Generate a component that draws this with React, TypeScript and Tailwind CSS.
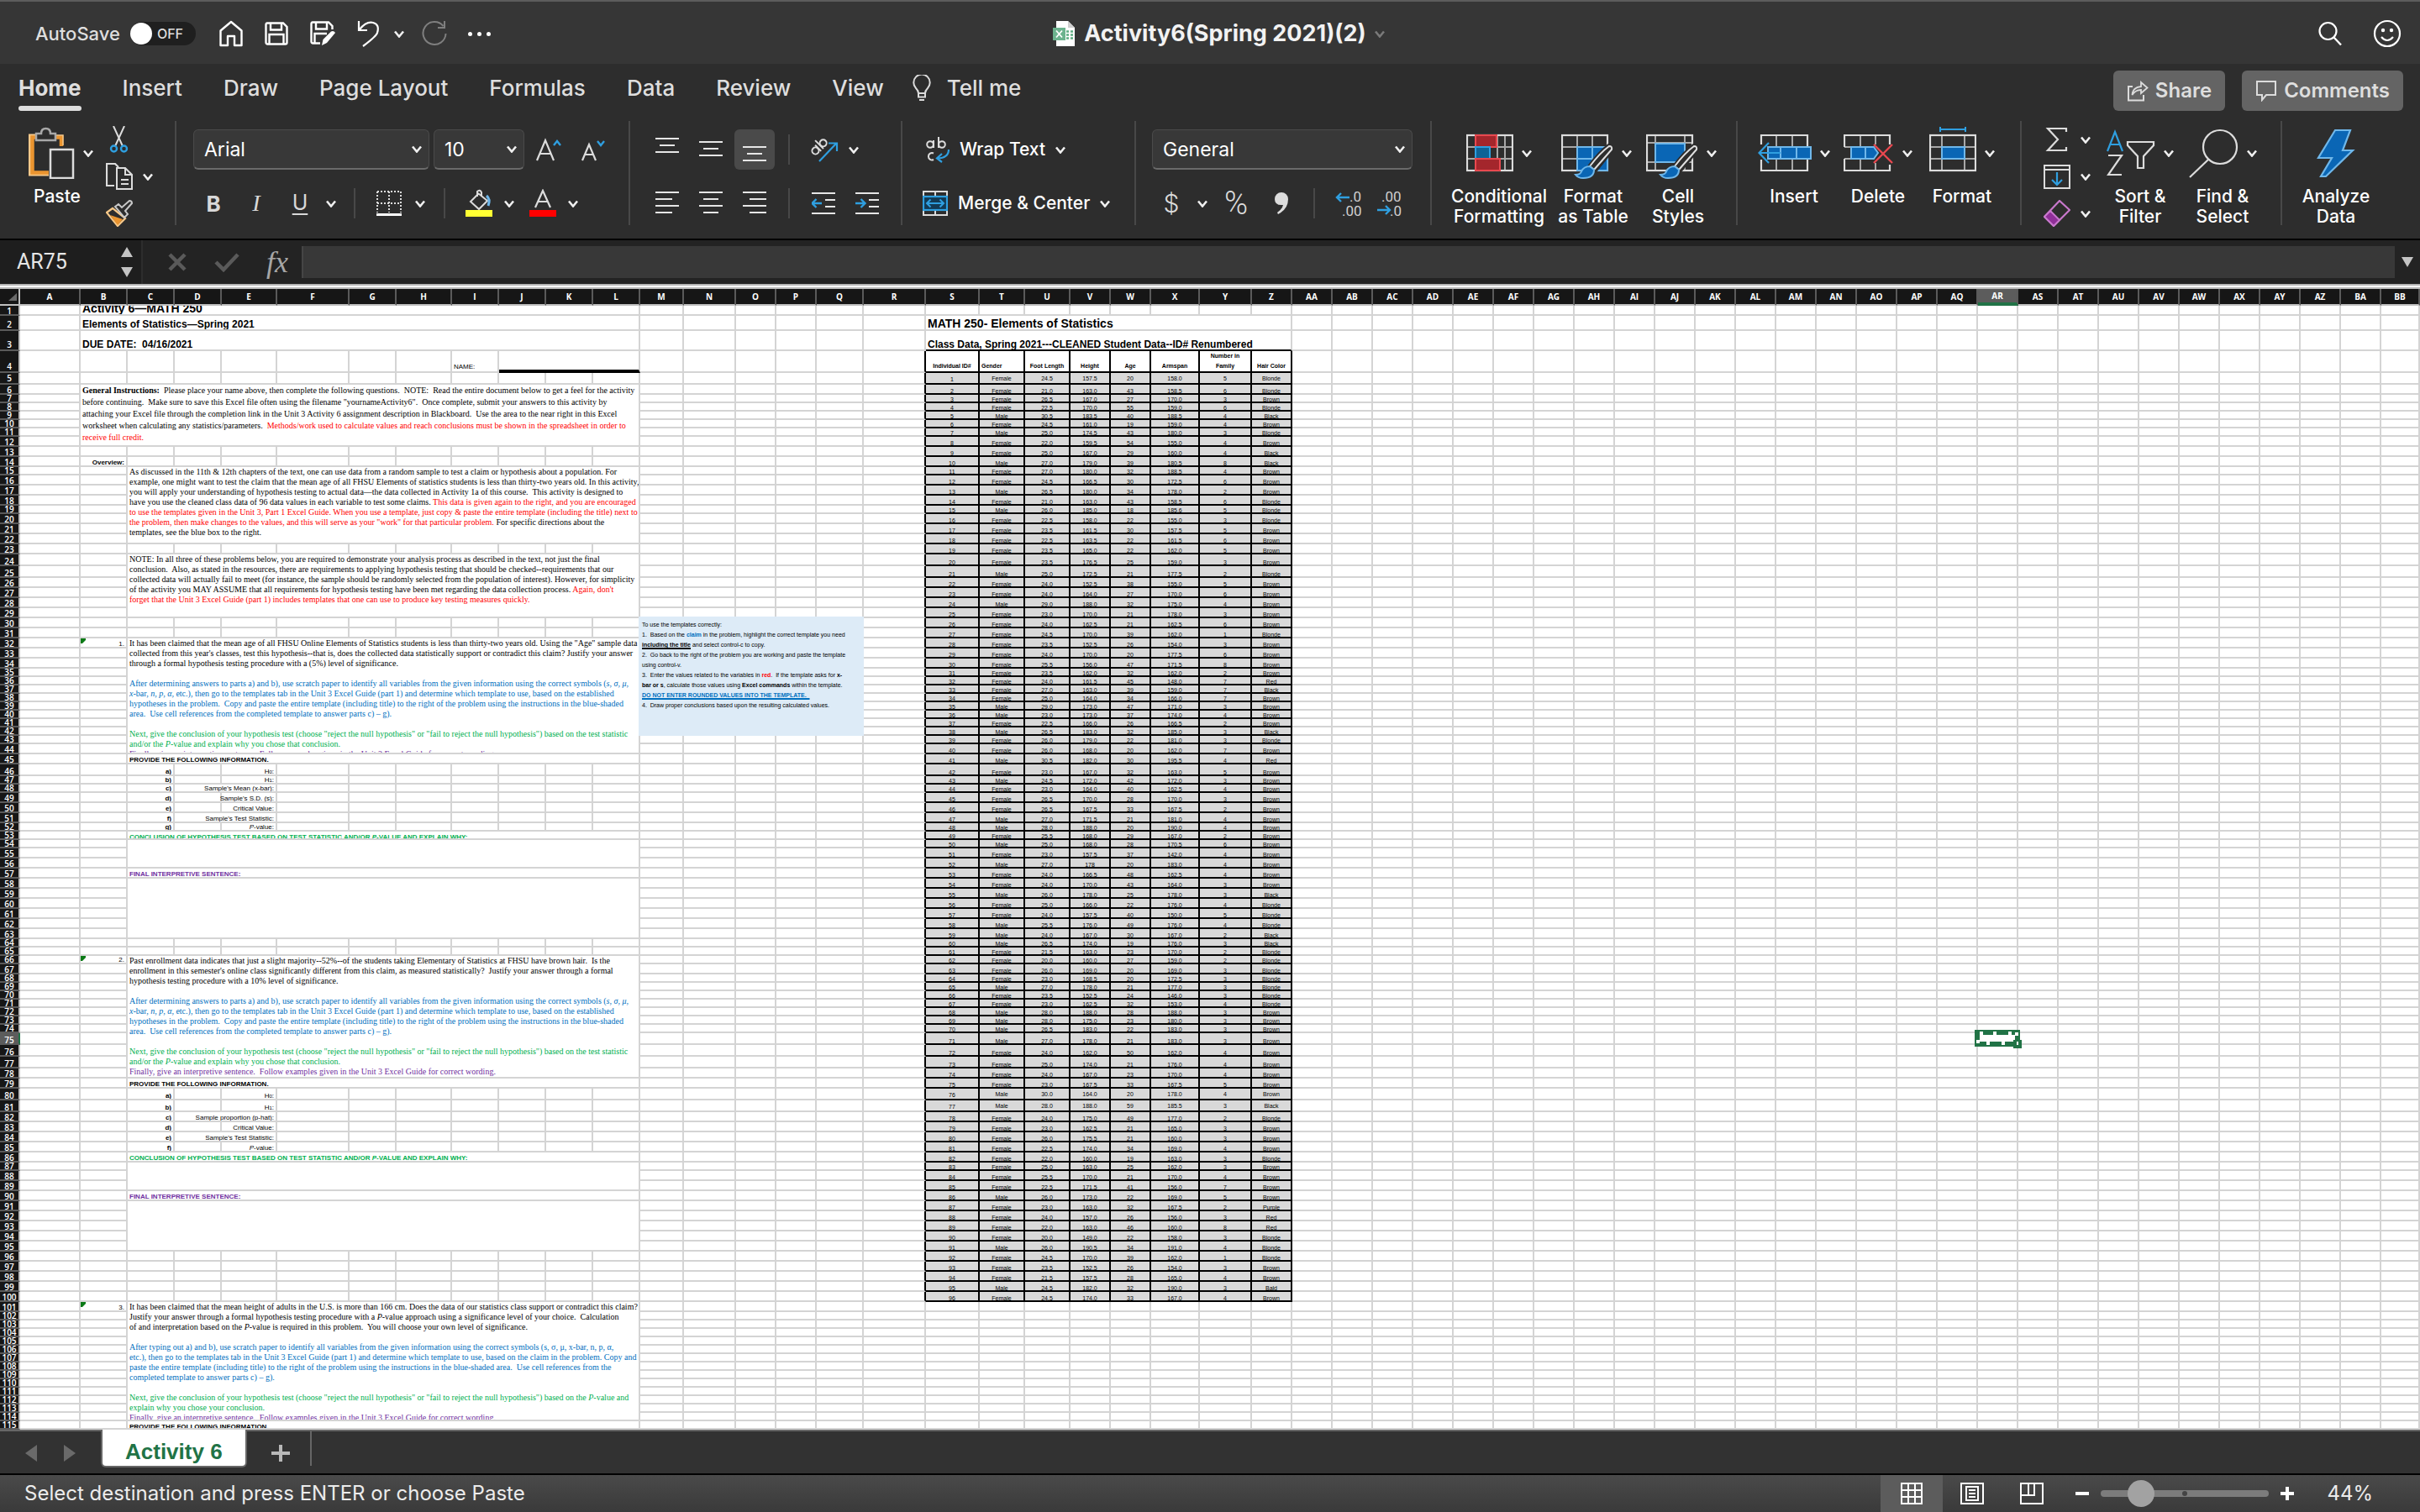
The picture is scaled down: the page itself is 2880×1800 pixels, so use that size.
import React from "react";

/* ------------------------------------------------------------------ */
/* Icons                                                               */
/* ------------------------------------------------------------------ */

type IconProps = { w: number; h: number; children: React.ReactNode; className?: string };

function Icon({ w, h, children, className }: IconProps) {
  return (
    <svg
      width={w}
      height={h}
      viewBox={`0 0 ${w} ${h}`}
      fill="none"
      stroke="#dcdcdc"
      strokeWidth={2}
      className={className ?? "shrink-0"}
      aria-hidden="true"
    >
      {children}
    </svg>
  );
}

function Chevron({ color = "#f0f0f0" }: { color?: string }) {
  return (
    <Icon w={12} h={9}>
      <path d="M1 1.5 6 7.5 11 1.5" stroke={color} strokeWidth={2.6} />
    </Icon>
  );
}

const BLUE = "#2f9fe0";
const FILL_BLUE = "#0a66b5";
const LIGHT_BLUE = "#6fb7ea";

const HomeIcon = () => (
  <Icon w={28} h={32}>
    <path d="M1.5 12.500 14 2 26.500 12.500V30H18V19H10V30H1.500Z" stroke="#fff" strokeWidth={2.4} strokeLinejoin="round" />
  </Icon>
);
const SaveIcon = () => (
  <Icon w={28} h={28}>
    <path d="M3 1.500H22L26.500 6V24.500Q26.500 26.500 24.500 26.500H3.500Q1.500 26.500 1.500 24.500V3.500Q1.500 1.500 3 1.500Z" stroke="#fff" strokeWidth={2.4} />
    <path d="M7 2V9.500H20V2M5.500 26V15H22.500V26" stroke="#fff" strokeWidth={2.4} />
  </Icon>
);
const SaveEditIcon = () => (
  <Icon w={32} h={30}>
    <path d="M12 26.500H3.500Q1.500 26.500 1.500 24.500V3.500Q1.500 1.500 3 1.500H22L26.500 6V10" stroke="#fff" strokeWidth={2.4} />
    <path d="M7 2V9.500H20V2M5.500 26V15H20" stroke="#fff" strokeWidth={2.4} />
    <path d="M14 29 15.500 22 25 12.500Q28 11 30 14L20 26Z" fill="#fff" stroke="none" />
  </Icon>
);
const UndoIcon = () => (
  <Icon w={28} h={32}>
    <path d="M2 1V12H12M2.500 11.500Q11 1 19 3T24 15Q23 19 7 31" stroke="#fff" strokeWidth={2.2} />
  </Icon>
);
const RedoIcon = () => (
  <Icon w={32} h={32}>
    <path d="M26.500 7A13.500 13.500 0 1 0 29.500 16" stroke="#7f7f7f" />
    <path d="M28 1V9H20" stroke="#7f7f7f" />
  </Icon>
);
const ExcelFileIcon = () => (
  <Icon w={28} h={30}>
    <path d="M5 0H19L27 8V30H5Z" fill="#fff" stroke="none" />
    <path d="M19 0V8H27Z" fill="#cfcfcf" stroke="none" />
    <path d="M17 12.500h3M22 12.500h3M17 16.500h3M22 16.500h3M17 20.500h3M22 20.500h3" stroke="#5fae84" strokeWidth={2.500} />
    <rect x="1" y="8" width="15" height="15" fill="#6cb38e" stroke="none" />
    <path d="M5 11.500 12 19.500M12 11.500 5 19.500" stroke="#fff" strokeWidth={1.800} />
  </Icon>
);
const SearchIcon = () => (
  <Icon w={28} h={30}>
    <circle cx="11.500" cy="12" r="10" stroke="#fff" strokeWidth={2.2} />
    <path d="M18.500 19.500 27 28.500" stroke="#fff" strokeWidth={2.400} />
  </Icon>
);
const SmileIcon = () => (
  <Icon w={34} h={34}>
    <circle cx="17" cy="17" r="15" stroke="#fff" strokeWidth={2.2} />
    <circle cx="12" cy="13" r="2.200" fill="#fff" stroke="none" />
    <circle cx="22" cy="13" r="2.200" fill="#fff" stroke="none" />
    <path d="M10 21Q17 29 24 21" stroke="#fff" strokeWidth={2.2} />
  </Icon>
);
const BulbIcon = () => (
  <Icon w={24} h={32}>
    <path d="M8 22Q8 19 5 16A9.700 9.700 0 1 1 19 16Q16 19 16 22Z" />
    <path d="M8 22V26.500H16V22M9 30H15" />
  </Icon>
);
const ShareIcon = () => (
  <Icon w={26} h={26}>
    <path d="M7 8H2V24.500H20V18" />
    <path d="M6.500 18Q7 9 17 8V3L24.500 9.500 17 16V12Q10 12 6.500 18Z" strokeWidth={1.800} />
  </Icon>
);
const CommentIcon = () => (
  <Icon w={26} h={26}>
    <path d="M2 2H24V18H13L8 24V18H2Z" />
  </Icon>
);
const PasteIcon = () => (
  <Icon w={56} h={62}>
    <path d="M10 10H2.500V57H25" stroke="#f7c98a" strokeWidth={3} />
    <path d="M10 12.500H5.500V54.500H25M32 12.500H40V23" stroke="#ea942f" strokeWidth={4.500} />
    <path d="M32 10H42V22" stroke="#f7c98a" strokeWidth={1.500} />
    <path d="M10 8H16Q16 2 21.500 2T27 8H33V16H10Z" stroke="#a8a8a8" strokeWidth={2.500} />
    <rect x="27" y="27" width="27" height="34" fill="#2d2d2d" strokeWidth={2.500} />
  </Icon>
);
const CutIcon = () => (
  <Icon w={32} h={32}>
    <path d="M9 0 20 24M22 0 11 24" strokeWidth={2} />
    <circle cx="9.500" cy="27" r="3.500" stroke={BLUE} strokeWidth={2.400} />
    <circle cx="21.500" cy="27" r="3.500" stroke={BLUE} strokeWidth={2.400} />
  </Icon>
);
const CopyIcon = () => (
  <Icon w={32} h={32}>
    <path d="M10 27H1V1H11L15 5" strokeWidth={2.200} />
    <path d="M13 6H23L31 14V31H13ZM23 6V14H31M18 20H27M18 25H27" strokeWidth={2} />
  </Icon>
);
const BrushIcon = () => (
  <Icon w={32} h={32}>
    <path d="M1 15 8 10 23 22 14 31Z" stroke="#f7c98a" strokeWidth={2.200} />
    <path d="M5 18 20 23 14 30Z" fill="#ea942f" stroke="none" />
    <path d="M11 8 15 5 19 9 28 1Q31 1 31 4L23 13 26 17 22 21Z" stroke="#c8c8c8" />
  </Icon>
);
const GrowFontIcon = () => (
  <Icon w={34} h={30}>
    <path d="M3 28 13 4 23 28M6.500 20H19.500" strokeWidth={2.200} />
    <path d="M23 10 27 5 31 10" stroke={BLUE} strokeWidth={2.400} />
  </Icon>
);
const ShrinkFontIcon = () => (
  <Icon w={34} h={30}>
    <path d="M3 28 11 9 19 28M6 21H16" strokeWidth={2.200} />
    <path d="M21 5 25 10 29 5" stroke={BLUE} strokeWidth={2.400} />
  </Icon>
);
const BordersIcon = () => (
  <Icon w={30} h={30}>
    <path d="M1 1H29M1 15H29M1 1V26M29 1V26M15 1V26" strokeDasharray="2 2" />
    <path d="M0 28.500H30" stroke="#fff" strokeWidth={3} />
  </Icon>
);
const FillIcon = () => (
  <Icon w={32} h={34}>
    <path d="M15 5 26 14 16 24 6 15 15 6M14 9V3Q17 0 19 4V9" strokeWidth={2} />
    <path d="M25 8Q30 12 27 20" stroke={LIGHT_BLUE} strokeWidth={3} />
    <rect x="0" y="25" width="32" height="8" fill="#ffff33" stroke="none" />
  </Icon>
);
const FontColorIcon = () => (
  <Icon w={32} h={34}>
    <path d="M7 22 16 2 25 22M10.500 15H21.500" strokeWidth={2.200} />
    <rect x="0" y="25" width="32" height="8" fill="#ff0000" stroke="none" />
  </Icon>
);
const AlignIcon = ({ rows }: { rows: [number, number, number][] }) => (
  <Icon w={28} h={28}>
    {rows.map(([y, a, b]) => (
      <path key={y} d={`M${a} ${y}H${b}`} stroke="#e6e6e6" />
    ))}
  </Icon>
);
const OrientationIcon = () => (
  <Icon w={34} h={32}>
    <g transform="rotate(-45 10 14)">
      <circle cx="5" cy="14" r="4" />
      <path d="M9.500 9V19M13.500 5V19" />
      <circle cx="18" cy="14" r="4" />
    </g>
    <path d="M11 30 31 9M22 8.500H32V18" stroke={BLUE} strokeWidth={2.200} />
  </Icon>
);
const IndentIcon = ({ right = false }: { right?: boolean }) => (
  <Icon w={28} h={28}>
    <path d="M0 2H28M16 10H28M16 18H28M0 26H28" stroke="#e6e6e6" />
    {right ? (
      <path d="M0 14H11M6.500 9 11.500 14 6.500 19" stroke={BLUE} strokeWidth={2.400} />
    ) : (
      <path d="M12 14H1M5.500 9 .5 14 5.500 19" stroke={BLUE} strokeWidth={2.400} />
    )}
  </Icon>
);
const WrapIcon = () => (
  <Icon w={28} h={32}>
    <circle cx="5" cy="10" r="3.800" />
    <path d="M9 5V14M15 1V14M9 20.500A4.200 4.200 0 1 0 9 28" />
    <circle cx="19" cy="10" r="3.800" />
    <path d="M27 16Q27 26 14 26.500M19 21 13 26.500 19 31" stroke={BLUE} strokeWidth={2.200} />
  </Icon>
);
const MergeIcon = () => (
  <Icon w={30} h={30}>
    <path d="M1 6V1H29V6M15 1V6M1 24V29H29V24M15 24V29" />
    <rect x="1" y="7" width="28" height="16" stroke={BLUE} strokeWidth={2.200} fill="#123a55" />
    <path d="M5 15H25M9.500 10.500 5 15 9.500 19.500M20.500 10.500 25 15 20.500 19.500" stroke={BLUE} />
  </Icon>
);
const DecimalIcon = ({ more }: { more: boolean }) => (
  <Icon w={34} h={32}>
    <g fill="#d0d0d0" stroke="none" fontFamily="Roboto, sans-serif" fontSize="17">
      {more ? (
        <>
          <text x="17" y="14">.0</text>
          <text x="8" y="31">.00</text>
        </>
      ) : (
        <>
          <text x="5" y="14">.00</text>
          <text x="15" y="31">.0</text>
        </>
      )}
    </g>
    {more ? (
      <path d="M17 9H2M7 4 2 9 7 14" stroke={BLUE} strokeWidth={2.400} />
    ) : (
      <path d="M0 24H15M10 19 15 24 10 29" stroke={BLUE} strokeWidth={2.400} />
    )}
  </Icon>
);
const ConditionalIcon = () => (
  <Icon w={56} h={64}>
    <path d="M1 25H55M1 39H55M11 11V53M37 11V53M46 11V53" stroke="#a8a8a8" />
    <rect x="1" y="11" width="54" height="42" strokeWidth={2.200} />
    <rect x="11" y="11" width="25" height="14" fill="#a4262c" stroke="#e8484f" />
    <rect x="11" y="25" width="17" height="14" fill="#0f6396" stroke="#2f9fe0" />
    <rect x="11" y="39" width="29" height="14" fill="#a4262c" stroke="#e8484f" />
  </Icon>
);
const BrushOverlay = () => (
  <>
    <path d="M57 24Q61 24 60 28L39 54 33 50Q46 32 57 24Z" fill="#2d2d2d" stroke="#2d2d2d" strokeWidth={6} />
    <path d="M57 24Q61 24 60 28L39 52 34 48Q46 32 57 24Z" fill="#2d2d2d" stroke="#e0e0e0" />
    <path d="M34 48 39 52Q39 62 26 62 20 62 17 58 23 58 24 54 27 48 34 48Z" fill={FILL_BLUE} stroke={LIGHT_BLUE} />
  </>
);
const FormatTableIcon = () => (
  <Icon w={62} h={64}>
    <path d="M1 25H55M1 39H55M19 11V53M37 11V53" stroke="#a8a8a8" />
    <rect x="1" y="11" width="54" height="42" strokeWidth={2.200} />
    <path d="M19 25H55V53H19ZM37 25V53M19 39H55" fill={FILL_BLUE} stroke={LIGHT_BLUE} />
    <BrushOverlay />
  </Icon>
);
const CellStylesIcon = () => (
  <Icon w={62} h={64}>
    <path d="M1 20H55M1 43H55M11 11V53M46 11V53" stroke="#a8a8a8" />
    <rect x="1" y="11" width="54" height="42" strokeWidth={2.200} />
    <rect x="11" y="21" width="35" height="22" fill={FILL_BLUE} stroke={LIGHT_BLUE} />
    <BrushOverlay />
  </Icon>
);
const InsertCellsIcon = () => (
  <Icon w={64} h={64}>
    <path d="M22 11V53M41 11V53" stroke="#a8a8a8" />
    <path d="M4 22V11H59V24M4 40V53H59V40" strokeWidth={2.200} />
    <rect x="12" y="25" width="51" height="14" fill={FILL_BLUE} stroke={LIGHT_BLUE} />
    <path d="M27 25V39M46 25V39" stroke={LIGHT_BLUE} />
    <path d="M27 32H2M13 20 1.500 32 13 44" stroke={BLUE} strokeWidth={2.200} />
  </Icon>
);
const DeleteCellsIcon = () => (
  <Icon w={60} h={64}>
    <path d="M20 11V24M38 11V22M20 40V53M38 44V53M1 25H9M1 39H9" stroke="#a8a8a8" />
    <path d="M1 25V11H55V22M1 39V53H55V46" strokeWidth={2.200} />
    <path d="M9 25H36L41 32 36 39H9ZM26 25V39" fill={FILL_BLUE} stroke={LIGHT_BLUE} />
    <path d="M36 22 58 44M58 22 36 44" stroke="#e8484f" strokeWidth={2.400} />
  </Icon>
);
const FormatCellsIcon = () => (
  <Icon w={56} h={64}>
    <path d="M13 4H43M13 1V7M43 1V7" stroke={BLUE} />
    <path d="M1 25H55M1 39H55M15 11V53M42 11V53" stroke="#a8a8a8" />
    <rect x="1" y="11" width="54" height="42" strokeWidth={2.200} />
    <rect x="15" y="25" width="27" height="14" fill={FILL_BLUE} stroke={LIGHT_BLUE} />
  </Icon>
);
const SigmaIcon = () => (
  <Icon w={32} h={32}>
    <path d="M27 7V3H5L17 16 5 29H27V25" strokeWidth={2.200} />
  </Icon>
);
const FillDownIcon = () => (
  <Icon w={32} h={32}>
    <path d="M1 3H31V30H1ZM1 8H31" />
    <path d="M16 11V26M10 20 16 26 22 20" stroke={BLUE} strokeWidth={2.200} />
  </Icon>
);
const EraserIcon = () => (
  <Icon w={32} h={32}>
    <path d="M1 20 19 1 31 12 12 31Z" stroke="#c878cc" strokeWidth={2.200} />
    <path d="M1 20 8 13 19 24 12 31Z" fill="#8f2f98" stroke="#c878cc" />
  </Icon>
);
const SortIcon = () => (
  <Icon w={58} h={64}>
    <path d="M1 30 10 7 19 30M4.500 22H15.500" stroke={BLUE} strokeWidth={2.200} />
    <path d="M2 35H18L2 58H18" strokeWidth={2.200} />
    <path d="M25 19H56V23L44 36V50H37V36L25 23Z" strokeWidth={2.200} />
  </Icon>
);
const FindIcon = () => (
  <Icon w={60} h={64}>
    <circle cx="38" cy="25" r="20" strokeWidth={2.200} />
    <path d="M24 40 2 61" strokeWidth={2.200} />
  </Icon>
);
const BoltIcon = () => (
  <Icon w={46} h={64}>
    <path d="M22 5H40L31 29H43L11 60H5L18 38H2Z" fill={FILL_BLUE} stroke={LIGHT_BLUE} strokeWidth={2.200} />
  </Icon>
);

/* ------------------------------------------------------------------ */
/* Ribbon                                                              */
/* ------------------------------------------------------------------ */

const VSep = ({ className }: { className: string }) => <div className={`h-9 w-0.5 bg-[#484848] ${className}`} />;

const IconButton = ({ label, className = "", children }: { label: string; className?: string; children: React.ReactNode }) => (
  <button type="button" aria-label={label} className={`flex shrink-0 items-center justify-center ${className}`}>
    {children}
  </button>
);

const MenuArrow = ({ label, className = "" }: { label: string; className?: string }) => (
  <IconButton label={`${label} options`} className={className}>
    <Chevron />
  </IconButton>
);

const Group = ({ className, children }: { className: string; children: React.ReactNode }) => (
  <div className={`flex h-[124px] shrink-0 border-r-2 border-[#484848] ${className}`}>{children}</div>
);

const TwoRows = ({ top, bottom }: { top: React.ReactNode; bottom: React.ReactNode }) => (
  <div className="flex flex-col gap-4 pt-2.5">
    <div className="flex h-12 items-center">{top}</div>
    <div className="flex h-12 items-center">{bottom}</div>
  </div>
);

type BigButtonProps = { icon: React.ReactNode; lines: string[]; className: string; labelClass?: string; arrow?: boolean };

const BigButton = ({ icon, lines, className, labelClass = "", arrow = true }: BigButtonProps) => (
  <button type="button" className={`flex shrink-0 flex-col items-center pt-1.5 ${className}`}>
    <span className="flex h-16 items-center gap-2.5">
      {icon}
      {arrow && <Chevron />}
    </span>
    <span className={`mt-2 flex flex-col text-[21px] leading-6 font-medium whitespace-nowrap text-white ${labelClass}`}>
      {lines.map((l) => (
        <span key={l}>{l}</span>
      ))}
    </span>
  </button>
);

const Dropdown = ({ label, value, className }: { label: string; value: string; className: string }) => (
  <label className={`grid h-12 shrink-0 items-center rounded-md border border-b-2 border-[#4a4a4a] border-b-[#6a6a6a] bg-[#383838] ${className}`}>
    <span className="sr-only">{label}</span>
    <select aria-label={label} defaultValue={value} className="col-start-1 row-start-1 h-full w-full appearance-none bg-transparent pl-3 text-[23px] leading-8 text-white outline-none">
      <option>{value}</option>
    </select>
    <span className="pointer-events-none col-start-1 row-start-1 mr-2 justify-self-end">
      <Chevron />
    </span>
  </label>
);

const LEFT: [number, number, number][] = [[1, 0, 28], [9, 0, 20], [17, 0, 28], [25, 0, 20]];
const CENTER: [number, number, number][] = [[1, 0, 28], [9, 5, 23], [17, 0, 28], [25, 5, 23]];
const RIGHT: [number, number, number][] = [[1, 0, 28], [9, 8, 28], [17, 0, 28], [25, 8, 28]];

function TitleBar() {
  return (
    <header className="flex h-[76px] items-center border-t-2 border-[#5c5c5c] bg-[#363636] px-[22px] pt-0.5">
      <div className="flex flex-1 items-center pl-5">
        <label className="flex items-center gap-3 text-[22px] font-medium text-[#dedede]">
          AutoSave
          <input type="checkbox" className="sr-only" />
          <span className="flex h-7 w-[78px] items-center gap-1.5 rounded-full bg-[#1f1f1f]">
            <span className="size-[26px] rounded-full bg-white" />
            <span className="text-[16px]">OFF</span>
          </span>
        </label>
        <IconButton label="Home" className="ml-7"><HomeIcon /></IconButton>
        <IconButton label="Save" className="ml-[26px]"><SaveIcon /></IconButton>
        <IconButton label="Save a copy" className="ml-[26px]"><SaveEditIcon /></IconButton>
        <IconButton label="Undo" className="ml-6"><UndoIcon /></IconButton>
        <MenuArrow label="Undo" className="ml-4" />
        <IconButton label="Redo" className="ml-5"><RedoIcon /></IconButton>
        <IconButton label="More" className="ml-6 gap-1.5">
          <span className="size-[5px] rounded-full bg-white" />
          <span className="size-[5px] rounded-full bg-white" />
          <span className="size-[5px] rounded-full bg-white" />
        </IconButton>
      </div>
      <div className="flex items-center gap-2.5">
        <ExcelFileIcon />
        <h1 className="text-[27px] leading-8 font-bold text-[#f2f2f2]">Activity6(Spring 2021)(2)</h1>
        <Chevron color="#7a7a7a" />
      </div>
      <div className="flex flex-1 items-center justify-end gap-[37px]">
        <IconButton label="Search"><SearchIcon /></IconButton>
        <IconButton label="Feedback"><SmileIcon /></IconButton>
      </div>
    </header>
  );
}

const TABS = ["Insert", "Draw", "Page Layout", "Formulas", "Data", "Review", "View"];

function RibbonTabs() {
  return (
    <nav className="flex h-16 items-start justify-between bg-[#2d2d2d] pr-5 pl-[22px] text-[26px] leading-[34px] font-medium text-[#dedede]">
      <div className="flex items-start gap-[49px] pt-3">
        <button type="button" className="flex flex-col font-bold">
          Home
          <span className="mt-1 h-1.5 w-full rounded-full bg-[#dedede]" />
        </button>
        {TABS.map((t) => (
          <button key={t} type="button">{t}</button>
        ))}
        <button type="button" className="-ml-4 flex items-center gap-[18px]">
          <BulbIcon />
          Tell me
        </button>
      </div>
      <div className="flex gap-5 pt-2 text-[24px] font-semibold">
        <button type="button" className="flex h-12 items-center gap-2 rounded-md bg-[#646464] px-4"><ShareIcon />Share</button>
        <button type="button" className="flex h-12 items-center gap-2 rounded-md bg-[#646464] px-4"><CommentIcon />Comments</button>
      </div>
    </nav>
  );
}

function Ribbon() {
  return (
    <div className="flex h-[146px] overflow-hidden border-b-2 border-black bg-[#2d2d2d] pt-1">
      <Group className="w-[210px] pl-[22px]">
        <BigButton icon={<PasteIcon />} lines={["Paste"]} className="w-[100px]" labelClass="pr-2" />
        <div className="ml-1 flex flex-col gap-3 pt-1.5">
          <IconButton label="Cut" className="self-start"><CutIcon /></IconButton>
          <div className="flex items-center gap-3"><IconButton label="Copy"><CopyIcon /></IconButton><MenuArrow label="Copy" /></div>
          <IconButton label="Format painter" className="self-start"><BrushIcon /></IconButton>
        </div>
      </Group>
      <Group className="w-[540px]">
        <TwoRows
          top={
            <>
              <Dropdown label="Font" value="Arial" className="ml-5 w-[281px]" />
              <Dropdown label="Font size" value="10" className="ml-[5px] w-[108px]" />
              <IconButton label="Increase font size" className="ml-3"><GrowFontIcon /></IconButton>
              <IconButton label="Decrease font size" className="ml-5"><ShrinkFontIcon /></IconButton>
            </>
          }
          bottom={
            <>
              <button type="button" className="ml-6 w-10 text-[26px] font-bold text-[#d8d8d8]">B</button>
              <button type="button" className="ml-[11px] w-10 font-['Liberation_Serif'] text-[28px] text-[#d8d8d8] italic">I</button>
              <button type="button" className="ml-3 w-10 text-[25px] text-[#d8d8d8] underline decoration-2 underline-offset-4">U</button>
              <MenuArrow label="Underline" className="ml-[11px]" />
              <VSep className="ml-[21px]" />
              <IconButton label="Borders" className="ml-[25px]"><BordersIcon /></IconButton>
              <MenuArrow label="Borders" className="ml-4" />
              <VSep className="ml-[22px]" />
              <IconButton label="Fill color" className="ml-6"><FillIcon /></IconButton>
              <MenuArrow label="Fill color" className="ml-3.5" />
              <IconButton label="Font color" className="ml-[18px]"><FontColorIcon /></IconButton>
              <MenuArrow label="Font color" className="ml-3.5" />
            </>
          }
        />
      </Group>
      <Group className="w-[324px]">
        <TwoRows
          top={
            <>
              <IconButton label="Top align" className="ml-[30px]"><AlignIcon rows={[[1, 0, 28], [9, 5, 23], [17, 0, 28]]} /></IconButton>
              <IconButton label="Middle align" className="ml-6"><AlignIcon rows={[[5, 0, 28], [13, 5, 23], [21, 0, 28]]} /></IconButton>
              <IconButton label="Bottom align" className="ml-3.5 h-12 w-12 rounded-md bg-[#4a4a4a]"><AlignIcon rows={[[11, 0, 28], [19, 5, 23], [27, 0, 28]]} /></IconButton>
              <VSep className="ml-4" />
              <IconButton label="Orientation" className="ml-6"><OrientationIcon /></IconButton>
              <MenuArrow label="Orientation" className="ml-3" />
            </>
          }
          bottom={
            <>
              <IconButton label="Align left" className="ml-[30px]"><AlignIcon rows={LEFT} /></IconButton>
              <IconButton label="Center" className="ml-6"><AlignIcon rows={CENTER} /></IconButton>
              <IconButton label="Align right" className="ml-6"><AlignIcon rows={RIGHT} /></IconButton>
              <VSep className="ml-[26px]" />
              <IconButton label="Decrease indent" className="ml-[26px]"><IndentIcon /></IconButton>
              <IconButton label="Increase indent" className="ml-6"><IndentIcon right /></IconButton>
            </>
          }
        />
      </Group>
      <Group className="w-[278px] text-[21px] font-medium text-white">
        <TwoRows
          top={<button type="button" className="ml-7 flex items-center gap-3 whitespace-nowrap"><WrapIcon />Wrap Text<Chevron /></button>}
          bottom={<button type="button" className="ml-6 flex items-center gap-3 whitespace-nowrap"><MergeIcon />Merge &amp; Center<Chevron /></button>}
        />
      </Group>
      <Group className="w-[352px]">
        <TwoRows
          top={<Dropdown label="Number format" value="General" className="ml-[19px] w-[310px]" />}
          bottom={
            <>
              <button type="button" className="ml-[30px] w-6 text-[30px] font-light text-[#dcdcdc]">$</button>
              <MenuArrow label="Currency" className="ml-[19px]" />
              <button type="button" className="ml-[14px] w-10 font-['Roboto'] text-[38px] font-light text-[#dcdcdc]">%</button>
              <IconButton label="Comma style" className="ml-6 w-5">
                <Icon w={18} h={28}>
                  <path d="M9 1A8 8 0 0 1 17 9Q17 21 5 27L4 25Q10 21 11 16 1 17 1 9A8 8 0 0 1 9 1Z" fill="#dcdcdc" stroke="none" />
                </Icon>
              </IconButton>
              <VSep className="ml-7" />
              <IconButton label="Increase decimal" className="ml-6"><DecimalIcon more /></IconButton>
              <IconButton label="Decrease decimal" className="ml-4"><DecimalIcon more={false} /></IconButton>
            </>
          }
        />
      </Group>
      <Group className="w-[364px] pl-[15px]">
        <BigButton icon={<ConditionalIcon />} lines={["Conditional", "Formatting"]} className="w-[130px]" />
        <BigButton icon={<FormatTableIcon />} lines={["Format", "as Table"]} className="w-[102px]" labelClass="pr-2" />
        <BigButton icon={<CellStylesIcon />} lines={["Cell", "Styles"]} className="w-[100px]" labelClass="pr-2" />
      </Group>
      <Group className="w-[338px] pl-[17px]">
        <BigButton icon={<InsertCellsIcon />} lines={["Insert"]} className="w-[100px]" />
        <BigButton icon={<DeleteCellsIcon />} lines={["Delete"]} className="w-[100px]" />
        <BigButton icon={<FormatCellsIcon />} lines={["Format"]} className="w-[100px]" />
      </Group>
      <Group className="w-[310px] pl-[26px]">
        <div className="flex flex-col gap-3 pt-1.5">
          <div className="flex items-center gap-3"><IconButton label="AutoSum"><SigmaIcon /></IconButton><MenuArrow label="AutoSum" /></div>
          <div className="flex items-center gap-3"><IconButton label="Fill"><FillDownIcon /></IconButton><MenuArrow label="Fill" /></div>
          <div className="flex items-center gap-3"><IconButton label="Clear"><EraserIcon /></IconButton><MenuArrow label="Clear" /></div>
        </div>
        <BigButton icon={<SortIcon />} lines={["Sort &", "Filter"]} className="ml-2.5 w-[98px]" />
        <BigButton icon={<FindIcon />} lines={["Find &", "Select"]} className="w-[98px]" />
      </Group>
      <BigButton icon={<BoltIcon />} lines={["Analyze", "Data"]} className="w-32" arrow={false} />
    </div>
  );
}

function FormulaBar() {
  return (
    <div className="flex h-[52px] items-center bg-[#232323]">
      <div className="flex h-full w-[170px] items-center border-r-2 border-[#2d2d2d] bg-[#1e1e1e]">
        <input aria-label="Name box" defaultValue="AR75" className="w-[143px] bg-transparent pl-5 font-['Roboto'] text-[25px] text-[#e6e6e6] outline-none" />
        <Icon w={16} h={38}>
          <path d="M8 1 15 13H1ZM8 37 15 25H1Z" fill="#c4c4c4" stroke="none" />
        </Icon>
      </div>
      <IconButton label="Cancel" className="ml-[29px]">
        <Icon w={24} h={22}><path d="M3 2 21 20M21 2 3 20" stroke="#5a5a5a" strokeWidth={4.500} /></Icon>
      </IconButton>
      <IconButton label="Enter" className="ml-8">
        <Icon w={30} h={24}><path d="M2 12 11 21 28 3" stroke="#5a5a5a" strokeWidth={4.500} /></Icon>
      </IconButton>
      <span className="ml-8 font-['Liberation_Serif'] text-[36px] leading-none text-[#a6a6a6] italic">fx</span>
      <input aria-label="Formula" className="ml-4 h-[38px] flex-1 border-l-2 border-[#454545] bg-[#383838] outline-none" />
      <IconButton label="Expand formula bar" className="mx-2">
        <Icon w={14} h={12}><path d="M0 0H14L7 12Z" fill="#c4c4c4" stroke="none" /></Icon>
      </IconButton>
    </div>
  );
}

/* ------------------------------------------------------------------ */
/* Worksheet                                                           */
/* ------------------------------------------------------------------ */

const rep = (n: number, v: number): number[] => Array.from({ length: n }, () => v);

const COL_WIDTHS = [
  72, 56, 56, 56, 66, 86, 56, 66, 56, 56, 56, 56, 52, 62, 48, 48, 56, 74,
  64, 54, 54, 48, 48, 58, 62, 48,
  ...rep(27, 48),
];

const ROW_HEIGHTS = [
  12, 18, 24, 26, 14, 12, ...rep(5, 10), 12, 12, 12, 10, 12, 12, 12, 10, 12, 12, 12, 12, 14, 14,
  ...rep(9, 12), ...rep(9, 10), 12, 12, 14, 10, 10, 12, 12, 12, 10, 10, 10, ...rep(9, 12),
  10, 10, 10, 12, ...rep(7, 10), 14, 14, 14, 12, 12, 14, 14, ...rep(5, 12), 10, ...rep(14, 12), ...rep(14, 10),
];

const colName = (i: number): string => (i < 26 ? String.fromCharCode(65 + i) : colName(Math.floor(i / 26) - 1) + String.fromCharCode(65 + (i % 26)));
const COLS = Array.from({ length: 54 }, (_, i) => colName(i));

const STUDENTS = `F 24.5 157.5 20 158.0 5 Blonde
F 21.0 163.0 43 158.5 6 Blonde
F 26.5 167.0 27 170.0 3 Brown
F 22.5 170.0 55 159.0 6 Blonde
M 30.5 183.5 40 188.5 4 Black
F 24.5 161.0 19 159.0 4 Brown
M 25.0 174.5 43 180.0 3 Blonde
F 22.0 159.5 54 155.0 4 Brown
F 25.0 167.0 29 160.0 4 Black
M 27.0 179.0 39 180.5 8 Black
F 27.0 180.0 32 188.5 4 Brown
F 24.5 166.5 30 172.5 6 Brown
M 26.5 180.0 34 178.0 2 Brown
F 21.0 163.0 43 158.5 6 Blonde
M 26.0 185.0 18 185.6 5 Blonde
F 22.5 158.0 22 155.0 3 Blonde
F 23.5 161.5 30 157.5 5 Brown
F 22.5 163.5 22 161.5 6 Brown
F 23.5 165.0 22 162.0 5 Brown
F 23.5 176.5 25 159.0 3 Brown
M 25.0 172.5 21 177.5 2 Blonde
F 24.0 152.5 38 155.0 5 Brown
F 24.0 164.0 27 170.0 6 Brown
M 29.0 188.0 32 175.0 4 Brown
F 23.0 170.0 21 178.0 3 Brown
F 24.0 162.5 21 162.5 6 Brown
F 24.5 170.0 39 162.0 1 Blonde
F 23.5 152.5 26 154.0 3 Brown
F 24.0 170.0 20 177.5 6 Brown
F 25.5 156.0 47 171.5 8 Brown
F 23.5 162.0 32 162.0 2 Brown
F 24.0 161.5 45 148.0 7 Red
F 27.0 163.0 39 159.0 7 Black
F 25.0 164.0 34 166.0 7 Brown
M 29.0 173.0 47 171.0 3 Brown
M 23.0 173.0 37 174.0 4 Brown
F 22.5 166.0 26 166.5 2 Brown
M 26.5 183.0 32 185.0 3 Black
F 26.0 179.0 22 181.0 3 Blonde
F 26.0 168.0 20 162.0 7 Brown
M 30.5 182.0 30 195.5 4 Red
F 23.0 167.0 32 163.0 5 Brown
M 24.5 172.0 42 172.0 3 Brown
F 23.0 164.0 40 162.5 4 Brown
F 26.5 170.0 28 170.0 3 Brown
F 26.5 167.5 33 167.5 2 Brown
M 27.0 171.5 21 181.0 4 Brown
M 28.0 188.0 20 190.0 4 Brown
F 25.5 168.0 29 167.0 2 Brown
M 25.0 168.0 28 170.5 6 Brown
F 23.0 157.5 37 142.0 4 Brown
M 27.0 178 20 183.0 4 Brown
F 24.0 166.5 48 162.5 4 Brown
F 24.0 170.0 43 164.0 3 Brown
M 26.0 178.0 25 178.0 3 Black
F 25.0 166.0 22 176.0 4 Blonde
F 24.0 157.5 40 150.0 5 Blonde
M 25.5 176.0 49 176.0 4 Blonde
M 24.0 167.0 30 167.0 2 Black
M 26.5 174.0 19 176.0 3 Black
F 21.5 163.0 23 170.0 2 Blonde
F 20.0 160.0 27 159.0 2 Blonde
F 26.0 169.0 20 169.0 3 Blonde
F 23.0 168.5 20 172.5 3 Blonde
M 27.0 178.0 21 177.0 3 Blonde
F 23.5 152.5 24 146.0 3 Blonde
F 23.0 162.5 32 153.0 4 Blonde
M 28.0 188.0 28 188.0 3 Brown
M 28.0 175.0 23 180.0 3 Brown
M 26.5 183.0 22 183.0 3 Brown
M 27.0 178.0 21 183.0 3 Brown
F 24.0 162.0 50 162.0 4 Brown
F 25.0 174.0 21 176.0 4 Brown
F 24.0 167.0 23 170.0 4 Brown
F 23.0 167.5 33 167.5 5 Brown
M 30.0 164.0 20 178.0 4 Brown
M 28.0 188.0 59 185.5 3 Black
F 24.0 175.0 49 177.0 2 Blonde
F 23.0 162.5 21 165.0 3 Brown
F 26.0 175.5 21 160.0 3 Brown
F 22.5 174.0 34 169.0 4 Brown
F 22.0 160.0 19 163.0 3 Blonde
F 25.0 163.0 25 162.0 3 Brown
F 25.5 170.0 21 170.0 4 Brown
F 22.5 171.5 41 156.0 7 Brown
M 26.0 173.0 22 169.0 5 Brown
F 23.0 163.0 32 167.5 2 Purple
F 24.0 157.0 26 156.0 3 Red
F 22.0 163.0 46 160.0 8 Red
F 20.0 149.0 22 158.0 3 Blonde
M 26.0 190.5 34 191.0 4 Blonde
F 24.5 170.0 39 162.0 1 Blonde
F 23.5 152.5 26 154.0 3 Brown
F 21.5 157.5 28 165.0 4 Brown
M 24.5 182.0 32 190.0 3 Bald
F 24.5 174.0 33 167.0 4 Brown`
  .split("\n")
  .map((line) => line.split(" "));

type Cell = { content?: React.ReactNode; rowSpan?: number; colSpan?: number; td?: string; box?: string; overlay?: React.ReactNode };

const cells = new Map<string, Cell>();
const covered = new Set<string>();

function put(col: string, row: number, cell: Cell) {
  const c = COLS.indexOf(col);
  cells.set(`${c}:${row}`, cell);
  for (let i = 0; i < (cell.colSpan ?? 1); i++)
    for (let j = 0; j < (cell.rowSpan ?? 1); j++) if (i || j) covered.add(`${c + i}:${row + j}`);
}

const TITLE = "items-end pl-0.5 font-bold";
const PARA = "items-start pl-0.5 font-['Liberation_Serif'] text-[10px] leading-3";
const CAPTION = "items-start pl-0.5 pt-[3px] text-[8px] leading-[8px] font-bold";
const RIGHT8 = "items-end justify-end pr-0.5 text-[8px] leading-[6px]";

put("B", 1, { colSpan: 11, box: `${TITLE} pb-0.5 text-[14px] leading-[10px]`, content: "Activity 6—MATH 250" });
put("B", 2, { colSpan: 11, box: `${TITLE} text-[12px] leading-3`, content: "Elements of Statistics—Spring 2021" });
put("B", 3, { colSpan: 11, box: `${TITLE} text-[12px] leading-3`, content: <>DUE DATE:&nbsp; 04/16/2021</> });
put("I", 4, { box: "items-end pl-0.5 text-[8px] leading-[10px]", content: "NAME:" });
put("J", 4, { colSpan: 3, td: "border-b-4 border-b-black" });

put("B", 6, {
  colSpan: 11,
  rowSpan: 7,
  box: "items-start pl-0.5 font-['Liberation_Serif'] text-[10px] leading-[14px]",
  content: (
    <p>
      <b>General Instructions:</b>&nbsp; Please place your name above, then complete the following questions.&nbsp; NOTE:&nbsp; Read the entire document below to get a feel for the activity<br />
      before continuing.&nbsp; Make sure to save this Excel file often using the filename "yournameActivity6".&nbsp; Once complete, submit your answers to this activity by<br />
      attaching your Excel file through the completion link in the Unit 3 Activity 6 assignment description in Blackboard.&nbsp; Use the area to the near right in this Excel<br />
      worksheet when calculating any statistics/parameters.&nbsp; <span className="text-[#ff0000]">Methods/work used to calculate values and reach conclusions must be shown in the spreadsheet in order to<br />
      receive full credit.</span>
    </p>
  ),
});
put("B", 14, { box: `${RIGHT8} font-bold`, content: "Overview:" });
put("C", 15, {
  colSpan: 10,
  rowSpan: 8,
  box: PARA,
  content: (
    <p>
      As discussed in the 11th &amp; 12th chapters of the text, one can use data from a random sample to test a claim or hypothesis about a population. For<br />
      example, one might want to test the claim that the mean age of all FHSU Elements of statistics students is less than thirty-two years old. In this activity,<br />
      you will apply your understanding of hypothesis testing to actual data—the data collected in Activity 1a of this course.&nbsp; This activity is designed to<br />
      have you use the cleaned class data of 96 data values in each variable to test some claims. <span className="text-[#ff0000]">This data is given again to the right, and you are encouraged<br />
      to use the templates given in the Unit 3, Part 1 Excel Guide. When you use a template, just copy &amp; paste the entire template (including the title) next to<br />
      the problem, then make changes to the values, and this will serve as your "work" for that particular problem.</span> For specific directions about the<br />
      templates, see the blue box to the right.
    </p>
  ),
});
put("C", 24, {
  colSpan: 10,
  rowSpan: 6,
  box: PARA,
  content: (
    <p>
      NOTE: In all three of these problems below, you are required to demonstrate your analysis process as described in the text, not just the final<br />
      conclusion.&nbsp; Also, as stated in the resources, there are requirements to applying hypothesis testing that should be checked--requirements that our<br />
      collected data will actually fail to meet (for instance, the sample should be randomly selected from the population of interest). However, for simplicity<br />
      of the activity you MAY ASSUME that all requirements for hypothesis testing have been met regarding the data collection process. <span className="text-[#ff0000]">Again, don't<br />
      forget that the Unit 3 Excel Guide (part 1) includes templates that one can use to produce key testing measures quickly.</span>
    </p>
  ),
});

const symbols = (
  <>
    After determining answers to parts a) and b), use scratch paper to identify all variables from the given information using the correct symbols (<i>s</i>, <i>σ</i>, <i>μ</i>,<br />
    <i>x</i>-bar, <i>n</i>, <i>p</i>, <i>α</i>, etc.), then go to the templates tab in the Unit 3 Excel Guide (part 1) and determine which template to use, based on the established<br />
    hypotheses in the problem.&nbsp; Copy and paste the entire template (including title) to the right of the problem using the instructions in the blue-shaded<br />
    area.&nbsp; Use cell references from the completed template to answer parts c) – g).
  </>
);
const nextStep = (
  <>
    Next, give the conclusion of your hypothesis test (choose "reject the null hypothesis" or "fail to reject the null hypothesis") based on the test statistic<br />
    and/or the <i>P</i>-value and explain why you chose that conclusion.
  </>
);
const finalStep = <>Finally, give an interpretive sentence.&nbsp; Follow examples given in the Unit 3 Excel Guide for correct wording.</>;

const FLAG = (
  <svg width="6" height="6" viewBox="0 0 6 6" className="absolute top-0 left-0" aria-hidden="true">
    <path d="M0 0H6V2L2 6H0Z" fill="#0b7a16" />
  </svg>
);

put("B", 32, { box: RIGHT8, content: "1.", overlay: FLAG });
put("C", 32, {
  colSpan: 10,
  rowSpan: 13,
  box: PARA,
  content: (
    <>
      <p>
        It has been claimed that the mean age of all FHSU Online Elements of Statistics students is less than thirty-two years old. Using the "Age" sample data<br />
        collected from this year's classes, test this hypothesis--that is, does the collected data statistically support or contradict this claim? Justify your answer<br />
        through a formal hypothesis testing procedure with a (5%) level of significance.
      </p>
      <p className="mt-3 text-[#0070c0]">{symbols}</p>
      <p className="mt-3 text-[#00b050]">{nextStep}</p>
      <p className="text-[#7030a0]">{finalStep}</p>
    </>
  ),
});

put("M", 30, {
  colSpan: 5,
  rowSpan: 13,
  overlay: (
    <div className="absolute -inset-0.5 overflow-hidden bg-[#ddebf7] pt-1 pl-1 text-[7px] leading-3 whitespace-nowrap">
      To use the templates correctly:<br />
      1.&nbsp; Based on the <b className="text-[#0070c0]">claim</b> in the problem, highlight the correct template you need<br />
      <b className="underline decoration-2">including the title</b> and select control-c to copy.<br />
      2.&nbsp; Go back to the right of the problem you are working and paste the template<br />
      using control-v.<br />
      3.&nbsp; Enter the values related to the variables in <b className="text-[#ff0000]">red</b>.&nbsp; If the template asks for <b>x-</b><br />
      <b>bar or s</b>, calculate those values using <b>Excel commands</b> within the template.<br />
      <b className="text-[#0070c0] underline decoration-2">DO NOT ENTER ROUNDED VALUES INTO THE TEMPLATE.&nbsp;&nbsp;</b><br />
      4.&nbsp; Draw proper conclusions based upon the resulting calculated values.
    </div>
  ),
});

const Hypothesis = ({ n }: { n: number }) => (
  <>
    H<span className="text-[6px]">{n}</span>:
  </>
);

function answerBlock(start: number, labels: [React.ReactNode, boolean][]) {
  put("C", start, { colSpan: 10, box: CAPTION, content: "PROVIDE THE FOLLOWING INFORMATION." });
  labels.forEach(([label, wide], i) => {
    const row = start + 1 + i;
    put("C", row, { box: `${RIGHT8} font-bold`, content: `${"abcdefg"[i]})` });
    put(wide ? "D" : "E", row, { colSpan: wide ? 2 : 1, box: RIGHT8, content: label });
  });
}

const conclusion = <>CONCLUSION OF HYPOTHESIS TEST BASED ON TEST STATISTIC AND/OR <i>P</i>-VALUE AND EXPLAIN WHY:</>;

answerBlock(45, [
  [<Hypothesis n={0} />, false],
  [<Hypothesis n={1} />, false],
  ["Sample's Mean (x-bar):", true],
  ["Sample's S.D. (s):", false],
  ["Critical Value:", false],
  ["Sample's Test Statistic:", true],
  [<><i>P</i>-value:</>, false],
]);
put("C", 53, { colSpan: 10, box: `${CAPTION} text-[#00b050]`, content: conclusion });
put("C", 54, { colSpan: 10, rowSpan: 3 });
put("C", 57, { colSpan: 10, box: `${CAPTION} text-[#7030a0]`, content: "FINAL INTERPRETIVE SENTENCE:" });
put("C", 58, { colSpan: 10, rowSpan: 6 });

put("B", 66, { box: RIGHT8, content: "2.", overlay: FLAG });
put("C", 66, {
  colSpan: 10,
  rowSpan: 13,
  box: PARA,
  content: (
    <>
      <p>
        Past enrollment data indicates that just a slight majority--52%--of the students taking Elementary of Statistics at FHSU have brown hair.&nbsp; Is the<br />
        enrollment in this semester's online class significantly different from this claim, as measured statistically?&nbsp; Justify your answer through a formal<br />
        hypothesis testing procedure with a 10% level of significance.
      </p>
      <p className="mt-3 text-[#0070c0]">{symbols}</p>
      <p className="mt-3 text-[#00b050]">{nextStep}</p>
      <p className="text-[#7030a0]">{finalStep}</p>
    </>
  ),
});
answerBlock(79, [
  [<Hypothesis n={0} />, false],
  [<Hypothesis n={1} />, false],
  ["Sample proportion (p-hat):", true],
  ["Critical Value:", false],
  ["Sample's Test Statistic:", true],
  [<><i>P</i>-value:</>, false],
]);
put("C", 86, { colSpan: 10, box: `${CAPTION} text-[#00b050]`, content: conclusion });
put("C", 87, { colSpan: 10, rowSpan: 3 });
put("C", 90, { colSpan: 10, box: `${CAPTION} text-[#7030a0]`, content: "FINAL INTERPRETIVE SENTENCE:" });
put("C", 91, { colSpan: 10, rowSpan: 5 });

put("B", 101, { box: RIGHT8, content: "3.", overlay: FLAG });
put("C", 101, {
  colSpan: 10,
  rowSpan: 14,
  box: PARA,
  content: (
    <>
      <p>
        It has been claimed that the mean height of adults in the U.S. is more than 166 cm. Does the data of our statistics class support or contradict this claim?<br />
        Justify your answer through a formal hypothesis testing procedure with a <i>P</i>-value approach using a significance level of your choice.&nbsp; Calculation<br />
        of and interpretation based on the <i>P</i>-value is required in this problem.&nbsp; You will choose your own level of significance.
      </p>
      <p className="mt-3 text-[#0070c0]">
        After typing out a) and b), use scratch paper to identify all variables from the given information using the correct symbols (s, σ, μ, x-bar, n, p, α,<br />
        etc.), then go to the templates tab in the Unit 3 Excel Guide (part 1) and determine which template to use, based on the claim in the problem. Copy and<br />
        paste the entire template (including title) to the right of the problem using the instructions in the blue-shaded area.&nbsp; Use cell references from the<br />
        completed template to answer parts c) – g).
      </p>
      <p className="mt-3 text-[#00b050]">
        Next, give the conclusion of your hypothesis test (choose "reject the null hypothesis" or "fail to reject the null hypothesis") based on the <i>P</i>-value and<br />
        explain why you chose your conclusion.
      </p>
      <p className="text-[#7030a0]">{finalStep}</p>
    </>
  ),
});
put("C", 115, { colSpan: 10, box: CAPTION, content: "PROVIDE THE FOLLOWING INFORMATION." });

/* Class data block, columns S to Z */
const BLACK = "border-black";
put("S", 2, { colSpan: 8, box: `${TITLE} text-[14px] leading-[14px]`, content: "MATH 250- Elements of Statistics" });
put("S", 3, { colSpan: 8, td: "border-b-black", box: `${TITLE} text-[12px] leading-3`, content: "Class Data, Spring 2021---CLEANED Student Data--ID# Renumbered" });
["Individual ID#", "Gender", "Foot Length", "Height", "Age", "Armspan", "Number in Family", "Hair Color"].forEach((h, i) => {
  const left = h === "Gender" ? "justify-start pl-0.5 text-left" : "justify-center text-center";
  const wrap = h === "Number in Family" ? "whitespace-normal px-2" : "";
  put(COLS[18 + i], 4, { td: BLACK, box: `items-end text-[7px] leading-3 font-bold ${left} ${wrap}`, content: h });
});
STUDENTS.forEach((s, n) => {
  const row = n + 5;
  const values = [String(n + 1), s[0] === "F" ? "Female" : "Male", ...s.slice(1)];
  const loose = [5, 80, 81].includes(row);
  put("R", row, { td: "border-r-black" });
  values.forEach((v, i) => {
    const align = loose ? (i === 0 ? "items-end pb-0.5" : "items-center") : "items-end";
    put(COLS[18 + i], row, { td: `${BLACK} bg-[#d9d9d9]`, box: `${align} justify-center text-[7px] leading-[5px]`, content: v });
  });
});
put("R", 4, { td: "border-r-black" });

put("AR", 75, {
  overlay: (
    <svg width="58" height="24" viewBox="0 0 58 24" className="absolute -top-1 -left-1 z-10" aria-hidden="true">
      <rect x="3" y="3" width="48" height="14" fill="#fff" stroke="#217346" strokeWidth="6" />
      <path d="M6 4h4M22 4h4M40 4h4M48 5h4M2 14h4M14 16h4M32 16h4" stroke="#fff" strokeWidth="4" />
      <rect x="46" y="12" width="10" height="10" fill="#217346" />
      <rect x="50" y="14" width="2" height="4" fill="#fff" />
    </svg>
  ),
});

const sum = (from: number, count: number) => ROW_HEIGHTS.slice(from - 1, from - 1 + count).reduce((a, b) => a + b, 0);

function Worksheet() {
  return (
    <div className="overflow-hidden border-t-2 border-[#b4b4b4] bg-white pt-0.5 font-['Liberation_Sans']">
      <table className="w-full table-fixed border-separate border-spacing-0 border-t-2 border-[#bdbdbd] bg-white text-[0px] leading-none whitespace-nowrap text-black">
        <colgroup>
          <col className="w-6" />
          {COL_WIDTHS.map((w, i) => (
            <col key={i} style={{ width: w }} />
          ))}
          <col />
        </colgroup>
        <thead>
          <tr className="h-5 bg-[#161616] font-['Open_Sans'] text-[10px] font-bold text-white">
            <th className="border-r-2 border-b-2 border-[#c0c0c0] p-0">
              <Icon w={18} h={16} className="ml-auto">
                <path d="M16 4V13H6Z" fill="#6a6a6a" stroke="none" />
              </Icon>
            </th>
            {COLS.map((c) => (
              <th
                key={c}
                scope="col"
                className={
                  c === "AR"
                    ? "border-r-2 border-b-4 border-r-[#5a5a5a] border-b-[#217346] bg-[#5c5c5c] p-0 leading-[14px] font-bold"
                    : "border-r-2 border-b-2 border-r-[#5a5a5a] border-b-[#c0c0c0] p-0 leading-[14px] font-bold"
                }
              >
                {c}
              </th>
            ))}
          </tr>
        </thead>
        <tbody>
          {ROW_HEIGHTS.map((h, r) => {
            const row = r + 1;
            const active = row === 75;
            return (
              <tr key={row} style={{ height: h }}>
                <th
                  scope="row"
                  className={`border-r-2 border-b-2 border-b-[#5a5a5a] p-0 font-['Open_Sans'] text-[10px] font-semibold text-white ${active ? "border-r-[#217346] bg-[#5c5c5c]" : "border-r-[#c0c0c0] bg-[#161616]"}`}
                >
                  <div
                    className={`flex items-end justify-center overflow-hidden leading-[8px] ${row > 1 && row < 6 ? "pb-0.5" : ""}`}
                    style={{ height: h - 2 }}
                  >
                    {row}
                  </div>
                </th>
                {COLS.map((c, i) => {
                  const key = `${i}:${row}`;
                  if (covered.has(key)) return null;
                  const cell = cells.get(key);
                  if (!cell) return <td key={c} className="border-r-2 border-b-2 border-[#d4d4d4] p-0" />;
                  return (
                    <td
                      key={c}
                      rowSpan={cell.rowSpan}
                      colSpan={cell.colSpan}
                      className={`border-r-2 border-b-2 p-0 ${cell.overlay ? "relative" : ""} ${cell.td?.startsWith(BLACK) ? "" : "border-[#d4d4d4]"} ${cell.td ?? ""}`}
                    >
                      {cell.content && (
                        <div
                          className={`flex overflow-x-visible overflow-y-clip ${cell.box ?? ""}`}
                          style={{ height: sum(row, cell.rowSpan ?? 1) - 2 }}
                        >
                          <div>{cell.content}</div>
                        </div>
                      )}
                      {cell.overlay}
                    </td>
                  );
                })}
              </tr>
            );
          })}
        </tbody>
      </table>
    </div>
  );
}

/* ------------------------------------------------------------------ */
/* Bottom bars                                                         */
/* ------------------------------------------------------------------ */

function SheetTabs() {
  return (
    <div className="flex h-[54px] items-start border-t-2 border-b-2 border-t-[#666666] border-b-black bg-[#323232]">
      <IconButton label="Previous sheet" className="mt-4 ml-[30px]">
        <Icon w={14} h={20}><path d="M14 0V20L0 10Z" fill="#6a6a6a" stroke="none" /></Icon>
      </IconButton>
      <IconButton label="Next sheet" className="mt-4 ml-8">
        <Icon w={14} h={20}><path d="M0 0V20L14 10Z" fill="#6a6a6a" stroke="none" /></Icon>
      </IconButton>
      <button type="button" className="-mt-0.5 ml-[30px] h-[45px] rounded-b-md border-2 border-t-0 border-[#666666] bg-white px-[27px] pt-2 font-['Liberation_Sans'] text-[26px] leading-8 font-bold text-[#217346]">
        Activity 6
      </button>
      <IconButton label="New sheet" className="mt-4 ml-[29px]">
        <Icon w={22} h={20}><path d="M11 0V20M0 10H22" stroke="#b8b8b8" strokeWidth={4} /></Icon>
      </IconButton>
      <div className="ml-6 h-[41px] w-0.5 bg-[#666666]" />
    </div>
  );
}

function StatusBar() {
  return (
    <footer className="flex h-11 items-center bg-linear-to-b from-[#4a4a4a] to-[#3a3a3a] pl-[29px] text-[24px] text-[#ececec]">
      <span className="flex-1">Select destination and press ENTER or choose Paste</span>
      <IconButton label="Normal view" className="h-11 w-[74px] bg-[#5c5c5c]">
        <Icon w={26} h={26}><path d="M1 1H25V25H1ZM1 9H25M1 17H25M9 1V25M17 1V25" stroke="#fff" /></Icon>
      </IconButton>
      <IconButton label="Page layout view" className="ml-[21px]">
        <Icon w={28} h={26}><path d="M1 1H27V25H1ZM7 5H21V21H7ZM10 9H18M10 13H18M10 17H18" stroke="#fff" /></Icon>
      </IconButton>
      <IconButton label="Page break preview" className="ml-[43px]">
        <Icon w={28} h={26}><path d="M1 1H27V25H1ZM1 15H17V1M10 1V15" stroke="#fff" /></Icon>
      </IconButton>
      <IconButton label="Zoom out" className="ml-[38px]">
        <Icon w={16} h={16}><path d="M0 8H16" stroke="#fff" strokeWidth={4} /></Icon>
      </IconButton>
      <div className="relative ml-3.5 flex w-[200px] items-center">
        <input
          type="range"
          aria-label="Zoom"
          min={0}
          max={100}
          defaultValue={19}
          className="h-2 w-full appearance-none rounded-full bg-[#7c7c7c] [&::-webkit-slider-thumb]:size-8 [&::-webkit-slider-thumb]:appearance-none [&::-webkit-slider-thumb]:rounded-full [&::-webkit-slider-thumb]:bg-[#a2a2a2]"
        />
        <span className="absolute left-1/2 size-1.5 -translate-x-1/2 rounded-full bg-[#444444]" />
      </div>
      <IconButton label="Zoom in" className="ml-3.5">
        <Icon w={16} h={16}><path d="M0 8H16M8 0V16" stroke="#fff" strokeWidth={4} /></Icon>
      </IconButton>
      <span className="mr-[56px] ml-[39px]">44%</span>
    </footer>
  );
}

export default function App() {
  return (
    <div className="flex min-h-screen flex-col overflow-hidden bg-[#2d2d2d] font-['Inter']">
      <TitleBar />
      <RibbonTabs />
      <Ribbon />
      <FormulaBar />
      <Worksheet />
      <SheetTabs />
      <StatusBar />
    </div>
  );
}
